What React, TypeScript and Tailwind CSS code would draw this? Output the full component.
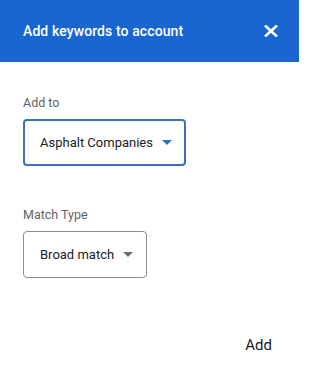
export default function App() {
  return (
    <div
      className="w-[299px] h-[378px] bg-white flex flex-col"
      style={{ fontFamily: "Roboto, 'Liberation Sans', sans-serif" }}
    >
      {/* Dialog header */}
      <header className="h-[62px] flex items-center justify-between bg-[#1a66d1] pl-[23px] pr-[20px]">
        <h1 className="text-[14px] font-medium text-white tracking-[0.1px]">Add keywords to account</h1>
        <button type="button" aria-label="Close" className="w-[16px] h-[16px] flex items-center justify-center">
          <svg viewBox="0 0 14 12" width="14" height="12" fill="none" stroke="white" strokeWidth="2.6" strokeLinecap="butt">
            <path d="M1 0.5 L13 11.5 M13 0.5 L1 11.5" />
          </svg>
        </button>
      </header>

      <main className="flex-1 flex flex-col pl-[23px] pt-[33px]">
        <label className="text-[12.5px] text-[#5f6368] leading-[16px]">Add to</label>
        <div className="mt-[8px] w-[163px] h-[47px] border-2 border-[#3a70b8] rounded-[4px] flex items-center pl-[15px]">
          <span className="text-[13px] text-[#202124]">Asphalt Companies</span>
          <span className="ml-[9px] w-0 h-0 border-l-[5px] border-r-[5px] border-t-[5px] border-l-transparent border-r-transparent border-t-[#2f6fc4]" />
        </div>

        <label className="mt-[41px] text-[12.5px] text-[#5f6368] leading-[16px]">Match Type</label>
        <div className="mt-[8px] w-[124px] h-[47px] border border-[#8a8d91] rounded-[4px] flex items-center pl-[16px]">
          <span className="text-[13px] text-[#202124]">Broad match</span>
          <span className="ml-[9px] w-0 h-0 border-l-[5px] border-r-[5px] border-t-[5px] border-l-transparent border-r-transparent border-t-[#6b6e72]" />
        </div>

        <div className="mt-auto mb-[22px] flex justify-end pr-[27px]">
          <button type="button" className="text-[15px] text-[#202124]">Add</button>
        </div>
      </main>
    </div>
  );
}
